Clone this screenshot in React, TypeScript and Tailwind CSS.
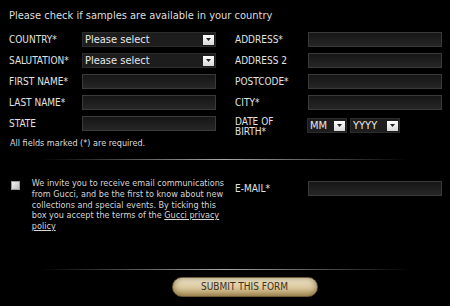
import React from "react";

const font = { fontFamily: '"DejaVu Sans Condensed", "DejaVu Sans", sans-serif' };

function Arrow() {
  return (
    <div className="w-[11px] h-[10px] bg-[linear-gradient(#ffffff,#d8d8d8)] flex items-center justify-center mr-[1px]">
      <svg width="5" height="3" viewBox="0 0 5 3">
        <path d="M0 0 L5 0 L2.5 3 Z" fill="#222" />
      </svg>
    </div>
  );
}

function Select({ text, w }: { text: string; w: string }) {
  return (
    <div className={`${w} h-[15px] bg-[#1d1d1d] border border-[#2c2c2c] flex items-center justify-between`}>
      <span className="pl-[2px] text-[11px] leading-none text-[#e8e8e8]">{text}</span>
      <Arrow />
    </div>
  );
}

function Input() {
  return <div className="w-[134px] h-[15px] border border-[#3a3a3a] bg-[linear-gradient(#161616,#262626)]" />;
}

function Row({ label, children }: { label: React.ReactNode; children: React.ReactNode }) {
  return (
    <div className="flex items-center h-[15px]">
      <div className="w-[73px] text-[10px] leading-none text-[#e2e2e2]">{label}</div>
      {children}
    </div>
  );
}

function Divider() {
  return (
    <div className="mx-[40px] h-[1px] bg-[linear-gradient(90deg,rgba(160,160,160,0),#a8a8a8_50%,rgba(160,160,160,0))]" />
  );
}

export default function App() {
  return (
    <div className="w-[450px] h-[306px] bg-black overflow-hidden" style={font}>
      <div className="pl-[9px] pt-[9px] text-[11px] leading-[14px] text-[#dedede]">
        Please check if samples are available in your country
      </div>
      <div className="flex pl-[9px] pt-[9px]">
        <div className="flex flex-col gap-[6px] w-[226px]">
          <Row label="COUNTRY*"><Select text="Please select" w="w-[134px]" /></Row>
          <Row label="SALUTATION*"><Select text="Please select" w="w-[134px]" /></Row>
          <Row label="FIRST NAME*"><Input /></Row>
          <Row label="LAST NAME*"><Input /></Row>
          <Row label="STATE"><Input /></Row>
          <div className="pl-[1px] text-[9px] leading-[12px] text-[#dcdcdc]">All fields marked (*) are required.</div>
        </div>
        <div className="flex flex-col gap-[6px]">
          <Row label="ADDRESS*"><Input /></Row>
          <Row label="ADDRESS 2"><Input /></Row>
          <Row label="POSTCODE*"><Input /></Row>
          <Row label="CITY*"><Input /></Row>
          <div className="flex items-start">
            <div className="w-[72px] pt-[1px] text-[10px] leading-[10px] text-[#e2e2e2]">
              DATE OF<br />BIRTH*
            </div>
            <div className="flex gap-[3px] pt-[2px]">
              <Select text="MM" w="w-[40px]" />
              <Select text="YYYY" w="w-[50px]" />
            </div>
          </div>
        </div>
      </div>
      <div className="pt-[10px]">
        <Divider />
      </div>
      <div className="flex pt-[21px] h-[109px]">
        <div className="flex w-[226px] pl-[11px]">
          <div className="w-[9px] h-[9px] border border-[#9a9a9a] bg-[linear-gradient(135deg,#f4f4f4,#bdbdbd)]" />
          <div className="pl-[12px] -mt-[3px] w-[210px] text-[9px] leading-[10.75px] text-[#d6d6d6] whitespace-nowrap">
            We invite you to receive email communications<br />
            from Gucci, and be the first to know about new<br />
            collections and special events. By ticking this<br />
            box you accept the terms of the <span className="underline">Gucci privacy</span><br />
            <span className="underline">policy</span>
          </div>
        </div>
        <div className="pl-[9px] flex items-start">
          <Row label="E-MAIL*"><Input /></Row>
        </div>
      </div>
      <Divider />
      <div className="flex justify-center pt-[7px] pl-[39px]">
        <div className="w-[146px] h-[20px] rounded-full border border-[#6d5b36] bg-[linear-gradient(#f5ecd4,#d9c79c_55%,#b39a64)] shadow-[inset_0_0_6px_rgba(110,85,40,0.7)] flex items-center justify-center text-[10px] text-[#3b3121] leading-none">
          SUBMIT THIS FORM
        </div>
      </div>
    </div>
  );
}
